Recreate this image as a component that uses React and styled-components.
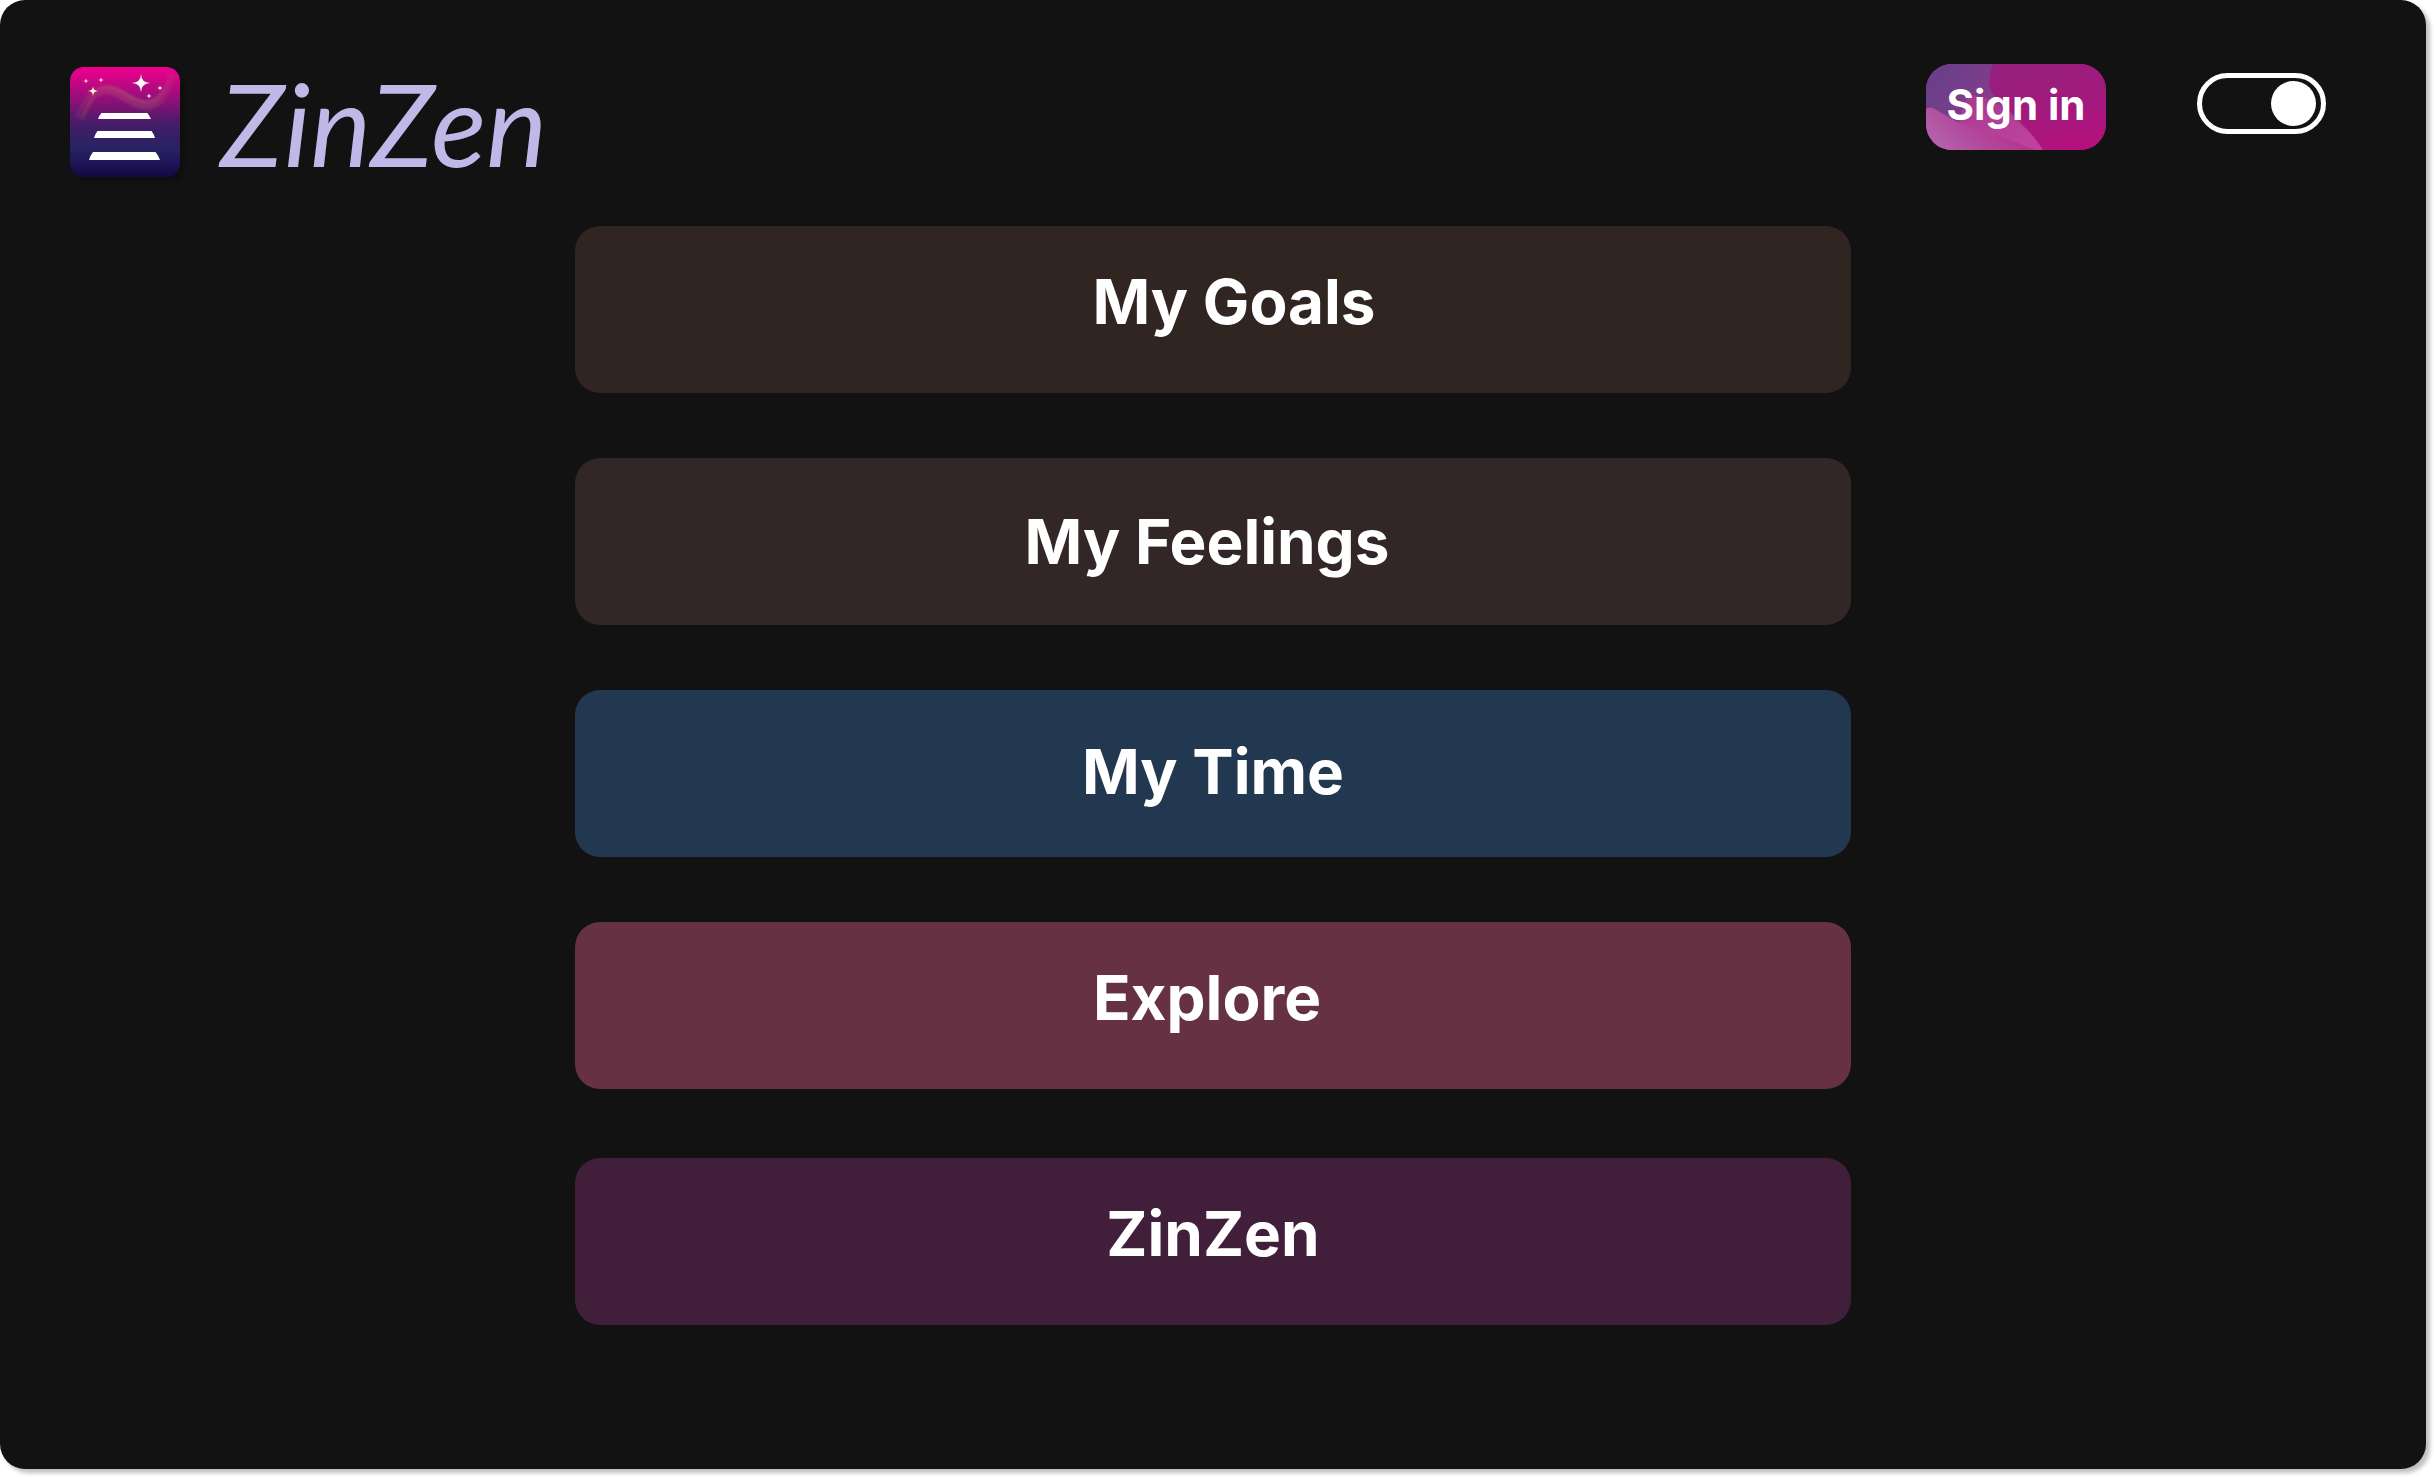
import React from "react";
import styled, { createGlobalStyle } from "styled-components";

const GlobalStyle = createGlobalStyle`
  *, *::before, *::after { box-sizing: border-box; }
  body {
    margin: 0;
    background: #ffffff;
    font-family: Inter, "Open Sans", sans-serif;
  }
`;

const Screen = styled.div`
  display: flex;
  flex-direction: column;
  min-height: calc(100vh - 8px);
  margin: 0 8px 8px 0;
  padding-bottom: 80px;
  border-radius: 25px;
  background: #121212;
  box-shadow: 4px 4px 4px rgba(0, 0, 0, 0.25);
`;

const Header = styled.header`
  display: flex;
  justify-content: space-between;
  align-items: flex-start;
  padding: 64px 100px 0 70px;
  height: 226px;
`;

const Brand = styled.div`
  display: flex;
  align-items: center;
  gap: 40px;
  padding-top: 3px;
`;

const MenuButton = styled.button`
  display: block;
  width: 110px;
  height: 110px;
  padding: 0;
  border: 0;
  border-radius: 14px;
  overflow: hidden;
  background: none;
  box-shadow: 4px 4px 4px rgba(0, 0, 0, 0.25);
  cursor: pointer;
  svg { display: block; }
`;

const Wordmark = styled.a`
  color: #c2b8e8;
  font: italic 400 115px/110px Lato, sans-serif;
  text-decoration: none;
`;

const Actions = styled.div`
  display: flex;
  align-items: flex-start;
  gap: 91px;
`;

const SignInButton = styled.button`
  position: relative;
  width: 180px;
  height: 86px;
  padding: 0 0 4px;
  border: 0;
  border-radius: 26px;
  overflow: hidden;
  background: #a51c80;
  color: #ffffff;
  font: 700 42px/48px Inter, sans-serif;
  cursor: pointer;
`;

const Petals = styled.svg`
  position: absolute;
  inset: 0;
  width: 100%;
  height: 100%;
`;

const SignInText = styled.span`
  position: relative;
`;

const Switch = styled.input`
  appearance: none;
  display: flex;
  align-items: center;
  width: 129px;
  height: 61px;
  margin: 9px 0 0;
  padding: 0 5px;
  border: 5px solid #ffffff;
  border-radius: 31px;
  cursor: pointer;
  &::before {
    content: "";
    width: 45px;
    height: 45px;
    border-radius: 50%;
    background: #ffffff;
  }
  &:checked { justify-content: flex-end; }
`;

const Menu = styled.nav`
  display: flex;
  flex-direction: column;
  gap: 69px;
  width: 52.6%;
  margin: 0 auto;
`;

const MenuGroup = styled.div`
  display: flex;
  flex-direction: column;
  gap: 65px;
`;

const LABEL_SPACE = {
  center: "0 0 4px",
  raised: "0 0 16px",
  left: "0 12px 0 0",
  raisedLeft: "0 12px 16px 0",
  raisedRight: "0 0 16px 42px",
};

const MenuItem = styled.button`
  display: flex;
  align-items: center;
  justify-content: center;
  height: 167px;
  padding: ${({ $label }) => LABEL_SPACE[$label]};
  border: 0;
  border-radius: 25px;
  background: ${({ $color }) => $color};
  color: #ffffff;
  font: 700 62px/72px Inter, sans-serif;
  cursor: pointer;
`;

const PERSONAL = [
  { name: "My Goals", color: "#302520", label: "raisedRight" },
  { name: "My Feelings", color: "#322626", label: "left" },
  { name: "My Time", color: "#223850", label: "center" },
  { name: "Explore", color: "#663142", label: "raisedLeft" },
];

const Star = ({ x, y, r, fill }) => (
  <path
    fill={fill}
    transform={`translate(${x} ${y}) scale(${r})`}
    d="M0-1Q.04-.04 1 0Q.04.04 0 1Q-.04.04-1 0Q-.04-.04 0-1Z"
  />
);

const MenuIcon = () => (
  <svg width="110" height="110" viewBox="0 0 110 110" aria-hidden="true">
    <defs>
      <linearGradient id="sky" x1="0" y1="0" x2="0" y2="1">
        <stop offset="0" stopColor="#ec008c" />
        <stop offset="0.05" stopColor="#e3018b" />
        <stop offset="0.3" stopColor="#8f1077" />
        <stop offset="0.52" stopColor="#451d68" />
        <stop offset="0.75" stopColor="#262262" />
        <stop offset="0.88" stopColor="#1d1456" />
        <stop offset="1" stopColor="#150843" />
      </linearGradient>
      <linearGradient id="haze" x1="0" y1="0" x2="1" y2="0">
        <stop offset="0" stopColor="#b06a70" stopOpacity="0.12" />
        <stop offset="0.35" stopColor="#b06a70" stopOpacity="0.28" />
        <stop offset="0.8" stopColor="#b06a70" stopOpacity="0.26" />
        <stop offset="1" stopColor="#d04a80" stopOpacity="0.1" />
      </linearGradient>
      <filter id="soft"><feGaussianBlur stdDeviation="1" /></filter>
    </defs>
    <rect width="110" height="110" fill="url(#sky)" />
    <g fill="none" stroke="url(#haze)" filter="url(#soft)">
      <path strokeWidth="9" d="M9 52C16 34 24 22 38 23C53 24 61 38 77 38C90 38 98 23 103 7" />
      <path strokeWidth="3" d="M13 51C20 33 26 19 38 20C53 21 61 35 77 35C90 35 98 20 103 7" />
    </g>
    <Star x={71} y={16} r={9} fill="#ffffff" />
    <circle cx="71" cy="16" r="1.500" fill="#ffffff" />
    <Star x={23} y={24} r={5} fill="#fff3d0" />
    <circle cx="23" cy="24" r="1.500" fill="#fff3d0" />
    <Star x={16} y={14} r={3} fill="#f7c0b8" />
    <circle cx="16" cy="14" r="1" fill="#f7c0b8" />
    <Star x={31} y={13} r={3} fill="#fbd5c8" />
    <circle cx="31" cy="13" r="1" fill="#fbd5c8" />
    <Star x={90} y={21} r={3} fill="#ffe9d0" />
    <circle cx="90" cy="21" r="1" fill="#ffe9d0" />
    <Star x={79} y={29} r={3} fill="#ffe9d0" />
    <circle cx="79" cy="29" r="1" fill="#ffe9d0" />
    <g fill="#ffffff">
      <path d="M31.500 46H77.500Q79.500 49 81 52H28Q29.500 48 31.500 46Z" />
      <path d="M27.500 64H81.500Q84 67 85 71H24Q25 67 27.500 64Z" />
      <path d="M23 85H85.500Q88 88 90 93H19Q20.500 88 23 85Z" />
    </g>
  </svg>
);

const SignInArt = () => (
  <Petals viewBox="0 0 180 86" preserveAspectRatio="none" aria-hidden="true">
    <defs>
      <linearGradient id="magenta" x1="0.45" y1="0" x2="1" y2="1">
        <stop offset="0" stopColor="#94207c" />
        <stop offset="0.6" stopColor="#a6187e" />
        <stop offset="1" stopColor="#b90e7c" />
      </linearGradient>
      <linearGradient id="violet" x1="0" y1="0.2" x2="1" y2="0.8">
        <stop offset="0" stopColor="#67408a" />
        <stop offset="1" stopColor="#98388a" />
      </linearGradient>
      <linearGradient id="rose" x1="0" y1="1" x2="1" y2="0.6">
        <stop offset="0" stopColor="#b56ab0" />
        <stop offset="0.5" stopColor="#b2489c" />
        <stop offset="1" stopColor="#b62a8a" />
      </linearGradient>
      <linearGradient id="orchid" x1="0" y1="0" x2="0.5" y2="1">
        <stop offset="0" stopColor="#a5388e" />
        <stop offset="1" stopColor="#bd439b" />
      </linearGradient>
    </defs>
    <rect width="180" height="86" fill="url(#magenta)" />
    <path fill="url(#violet)" d="M0 0H67Q61 16 65 28Q76 42 96 58L0 86Z" />
    <path fill="url(#orchid)" d="M33 59Q37 34 46 31Q72 34 92 57Q108 71 117 86H20Z" />
    <path fill="url(#rose)" d="M0 45Q4 41 12 47L33 59Q74 70 108 86H0Z" />
  </Petals>
);

export default function App() {
  return (
    <>
      <GlobalStyle />
      <Screen>
        <Header>
          <Brand>
            <MenuButton type="button" aria-label="Menu">
              <MenuIcon />
            </MenuButton>
            <Wordmark href="#">ZinZen</Wordmark>
          </Brand>
          <Actions>
            <SignInButton type="button">
              <SignInArt />
              <SignInText>Sign in</SignInText>
            </SignInButton>
            <Switch type="checkbox" role="switch" aria-label="Dark mode" defaultChecked />
          </Actions>
        </Header>
        <Menu>
          <MenuGroup>
            {PERSONAL.map(({ name, color, label }) => (
              <MenuItem key={name} type="button" $color={color} $label={label}>
                {name}
              </MenuItem>
            ))}
          </MenuGroup>
          <MenuItem type="button" $color="#411f3a" $label="raised">
            ZinZen
          </MenuItem>
        </Menu>
      </Screen>
    </>
  );
}
